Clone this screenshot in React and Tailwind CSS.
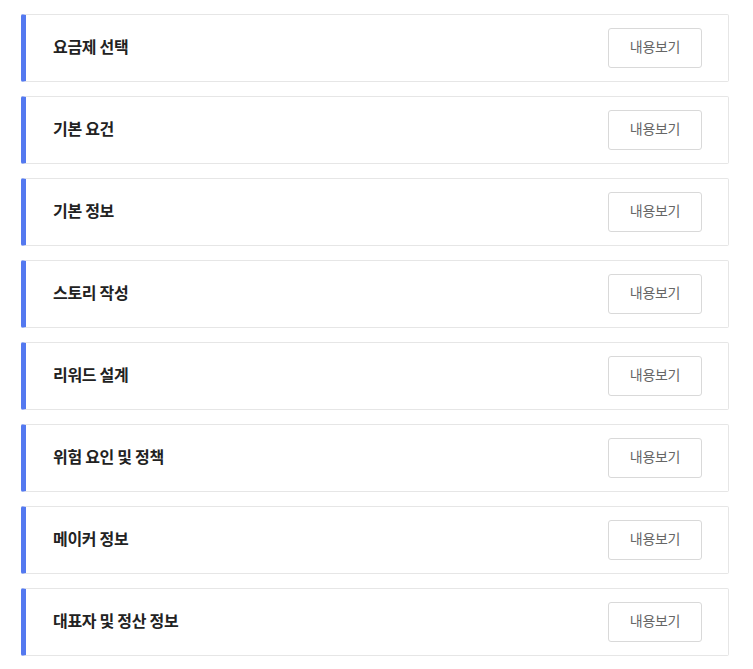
import React from "react";

const items = [
  "요금제 선택",
  "기본 요건",
  "기본 정보",
  "스토리 작성",
  "리워드 설계",
  "위험 요인 및 정책",
  "메이커 정보",
  "대표자 및 정산 정보",
];

export default function App() {
  return (
    <div
      className="bg-white min-h-[669px] pt-[14px] pl-[21px] w-[729px] flex flex-col gap-[14px]"
      style={{ fontFamily: '"Noto Sans CJK KR", "Noto Sans", sans-serif' }}
    >
      {items.map((t) => (
        <div
          key={t}
          className="h-[68px] flex items-center justify-between border border-[#e6e6e6] border-l-[5px] border-l-[#5479f0] rounded-[2px] pl-[27px] pr-[26px]"
        >
          <span className="text-[16px] font-bold text-[#222] tracking-[-0.3px] pb-[4px]">{t}</span>
          <button className="w-[94px] h-[40px] border border-[#d9d9d9] rounded-[3px] bg-white text-[14px] text-[#666] tracking-[-0.3px] pb-[3px]">
            내용보기
          </button>
        </div>
      ))}
    </div>
  );
}
